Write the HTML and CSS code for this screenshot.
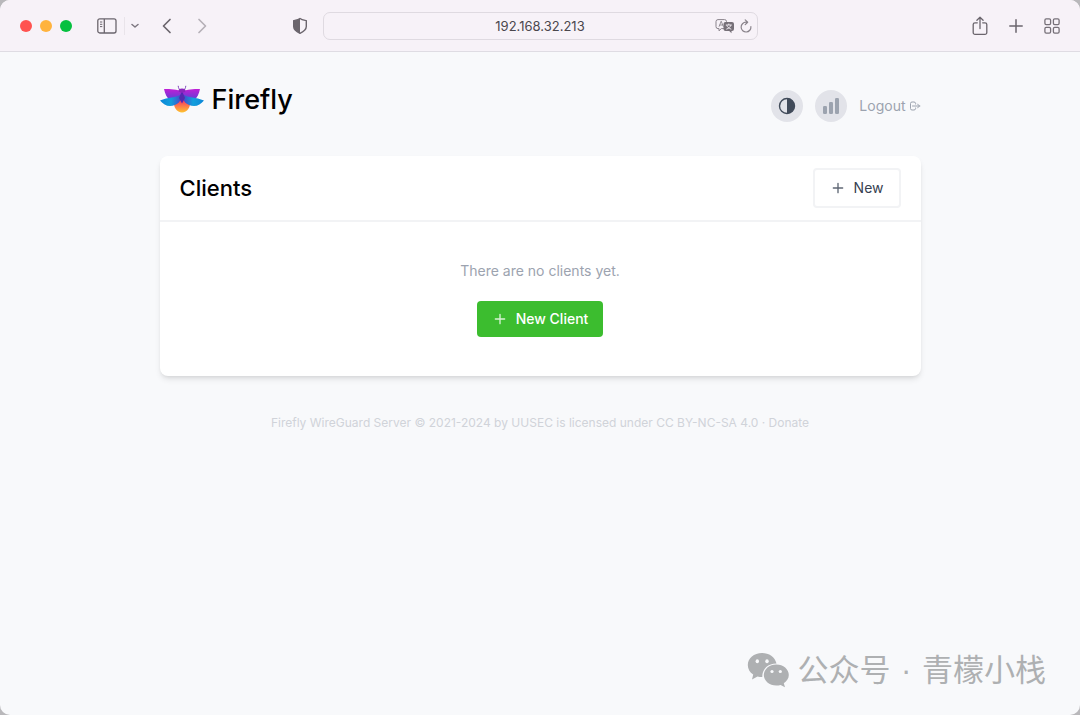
FILE: index.html
```html
<!DOCTYPE html>
<html lang="en">
<head>
<meta charset="utf-8">
<meta name="viewport" content="width=device-width, initial-scale=1">
<title>Firefly</title>
<link rel="stylesheet" href="styles.css">
</head>
<body>
<div class="window">
  <header class="toolbar">
    <div class="toolbar-side">
      <div class="lights">
        <button class="light light-close" aria-label="Close"></button>
        <button class="light light-min" aria-label="Minimize"></button>
        <button class="light light-max" aria-label="Zoom"></button>
      </div>
      <button class="tool" aria-label="Sidebar">
        <svg width="20" height="16" viewBox="0 0 20 16" fill="none" stroke="#6b656d" stroke-width="1.3"><rect x=".8" y=".8" width="18.2" height="14.2" rx="2"/><path d="M7.3 1v14"/><path d="M3 4h2.300M3 6.300h2.300M3 8.600h2.300" stroke-width="1"/></svg>
      </button>
      <button class="tool tool-more" aria-label="Tab groups">
        <svg width="8" height="6" viewBox="0 0 8 6" fill="none" stroke="#7d7780" stroke-width="1.500" stroke-linecap="round" stroke-linejoin="round"><path d="M1 1.500l3 2.500 3-2.500"/></svg>
      </button>
      <button class="tool tool-back" aria-label="Back">
        <svg width="10" height="16" viewBox="0 0 10 16" fill="none" stroke="#6b656d" stroke-width="1.700" stroke-linecap="round" stroke-linejoin="round"><path d="M8 1.500L1.500 8 8 14.500"/></svg>
      </button>
      <button class="tool tool-forward" aria-label="Forward">
        <svg width="10" height="16" viewBox="0 0 10 16" fill="none" stroke="#b6b0b8" stroke-width="1.700" stroke-linecap="round" stroke-linejoin="round"><path d="M2 1.500L8.500 8 2 14.500"/></svg>
      </button>
      <button class="tool tool-shield" aria-label="Privacy report">
        <svg width="16" height="18" viewBox="0 0 16 18"><path d="M8 1.500C6 3 3.500 3.200 1.700 3.600v6c0 3.400 3.300 5.300 6.300 6.700 3-1.400 6.300-3.300 6.300-6.700v-6C12.500 3.200 10 3 8 1.500z" fill="none" stroke="#6b656d" stroke-width="1.400" stroke-linejoin="round"/><path d="M8 1.500C6 3 3.500 3.200 1.700 3.600v6c0 3.400 3.300 5.300 6.300 6.700z" fill="#6b656d"/></svg>
      </button>
    </div>
    <div class="address">
      <input class="address-input" type="text" aria-label="Address" value="192.168.32.213">
      <div class="address-tools">
        <button class="tool" aria-label="Translate">
          <svg width="20" height="16" viewBox="0 0 20 16"><path d="M3 1.600h6.500a2 2 0 0 1 2 2v5a2 2 0 0 1-2 2H6.300L4 12.800v-2.200H3a2 2 0 0 1-2-2v-5a2 2 0 0 1 2-2z" fill="none" stroke="#89838b"/><path d="M4 8.700l2.200-5.500 2.200 5.500M4.800 7h2.900" fill="none" stroke="#89838b" stroke-width=".9"/><path d="M10.500 4H17a2 2 0 0 1 2 2v5a2 2 0 0 1-2 2h-.5v2.300L14.200 13h-3.700a2 2 0 0 1-2-2V6a2 2 0 0 1 2-2z" fill="#767078"/><path d="M10.800 7h6M13.800 5.600V7M11.800 7.200c.5 1.800 2 3.200 4.500 4M15.800 7.200c-.5 1.800-2 3.200-4.500 4" fill="none" stroke="#f7f2f8" stroke-width=".9"/></svg>
        </button>
        <button class="tool" aria-label="Reload">
          <svg width="12" height="14" viewBox="0 0 12 14" fill="none" stroke="#89838b" stroke-width="1.200" stroke-linecap="round" stroke-linejoin="round"><path d="M10.900 7.600A4.900 4.900 0 1 1 6 3.200h1.500M5.200 .9l2.500 2.300-2.500 2.400"/></svg>
        </button>
      </div>
    </div>
    <div class="toolbar-side toolbar-end">
      <button class="tool" aria-label="Share">
        <svg width="16" height="20" viewBox="0 0 16 20" fill="none" stroke="#6b656d" stroke-width="1.300" stroke-linecap="round" stroke-linejoin="round"><path d="M5.300 6.800H3a1.800 1.800 0 0 0-1.800 1.800v8A1.800 1.800 0 0 0 3 18.400h10a1.800 1.800 0 0 0 1.800-1.800v-8A1.800 1.800 0 0 0 13 6.800h-2.300M8 12.500V1.500M4.900 4.300L8 1.300l3.100 3"/></svg>
      </button>
      <button class="tool" aria-label="New tab">
        <svg width="14" height="14" viewBox="0 0 14 14" fill="none" stroke="#6b656d" stroke-width="1.500" stroke-linecap="round"><path d="M7 .8v12.400M.8 7h12.400"/></svg>
      </button>
      <button class="tool" aria-label="Tab overview">
        <svg width="16" height="16" viewBox="0 0 16 16" fill="none" stroke="#777179" stroke-width="1.300"><rect x=".9" y=".9" width="5.700" height="5.700" rx="1.300"/><rect x="9.400" y=".9" width="5.700" height="5.700" rx="1.300"/><rect x=".9" y="9.400" width="5.700" height="5.700" rx="1.300"/><rect x="9.400" y="9.400" width="5.700" height="5.700" rx="1.300"/></svg>
      </button>
    </div>
  </header>

  <main class="page">
    <div class="masthead">
      <h1 class="brand">
        <svg width="44" height="30" viewBox="0 0 44 30" aria-hidden="true">
          <defs>
            <linearGradient id="upper" x1="0" y1="0" x2="0" y2="1"><stop offset="0" stop-color="#c01fd6"/><stop offset="1" stop-color="#5b3fd6"/></linearGradient>
            <linearGradient id="left" x1="0" y1="0" x2="1" y2="0"><stop offset="0" stop-color="#0c86d8"/><stop offset=".5" stop-color="#129fdc"/><stop offset="1" stop-color="#4a3fc8"/></linearGradient>
            <linearGradient id="right" x1="1" y1="0" x2="0" y2="0"><stop offset="0" stop-color="#0c86d8"/><stop offset=".5" stop-color="#129fdc"/><stop offset="1" stop-color="#4a3fc8"/></linearGradient>
            <linearGradient id="tail" x1="0" y1="0" x2="0" y2="1"><stop offset="0" stop-color="#ee1f7c"/><stop offset=".4" stop-color="#fa6552"/><stop offset="1" stop-color="#ffc52e"/></linearGradient>
          </defs>
          <path d="M14 16c3-3 13-3 16 0 1 6-3 11.500-8 11.500S13 22 14 16z" fill="url(#tail)"/>
          <path d="M4 4c7 0 13 0 18 3 5-3 11-3 18-3-1 5-3 9-6 11H10C7 13 5 9 4 4z" fill="url(#upper)"/>
          <path d="M0 15.500C8 12 16 13 22 9c0 7-5 12-12 12-4 0-7-2-10-5.500z" fill="url(#left)"/>
          <path d="M44 15.500C36 12 28 13 22 9c0 7 5 12 12 12 4 0 7-2 10-5.500z" fill="url(#right)"/>
          <path d="M22 6l3 7-3 5.500-3-5.500z" fill="#5527b0"/>
          <path d="M18.200 .8c.2 2.500 1 3.600 2.400 4.200M25.800 .8c-.2 2.500-1 3.600-2.400 4.200" fill="none" stroke="#8148bb" stroke-width="1"/>
          <ellipse cx="22" cy="5.500" rx="3.500" ry="2" fill="#8a25bd"/>
        </svg>
        <span>Firefly</span>
      </h1>
      <div class="actions">
        <button class="round" aria-label="Toggle theme">
          <svg width="18" height="18" viewBox="0 0 18 18"><circle cx="9" cy="9" r="7.500" fill="none" stroke="#414b5a" stroke-width="1.400"/><path d="M9 1.500a7.500 7.500 0 0 1 0 15z" fill="#414b5a"/></svg>
        </button>
        <button class="round" aria-label="Toggle charts">
          <svg width="16" height="16" viewBox="0 0 16 16" fill="#9ca3af"><rect x="0" y="8" width="4" height="8" rx="1.200"/><rect x="6" y="4" width="4" height="12" rx="1.200"/><rect x="12" y="0" width="4" height="16" rx="1.200"/></svg>
        </button>
        <a class="logout" href="#">Logout
          <svg width="12" height="12" viewBox="0 0 24 24" fill="none" stroke="#9ca3af" stroke-width="2" stroke-linecap="round" stroke-linejoin="round"><path d="M17 16l4-4m0 0l-4-4m4 4H7m6 4v1a3 3 0 0 1-3 3H6a3 3 0 0 1-3-3V7a3 3 0 0 1 3-3h4a3 3 0 0 1 3 3v1"/></svg>
        </a>
      </div>
    </div>

    <section class="card">
      <div class="card-head">
        <h2 class="card-title">Clients</h2>
        <button class="btn btn-outline">
          <svg class="plus" width="16" height="16" viewBox="0 0 24 24" fill="none" stroke="currentColor" stroke-width="2" stroke-linecap="round"><path d="M12 5v14M5 12h14"/></svg>
          <span>New</span>
        </button>
      </div>
      <div class="card-body">
        <p class="empty">There are no clients yet.</p>
        <button class="btn btn-primary">
          <svg class="plus" width="16" height="16" viewBox="0 0 24 24" fill="none" stroke="currentColor" stroke-width="2" stroke-linecap="round"><path d="M12 5v14M5 12h14"/></svg>
          <span>New Client</span>
        </button>
      </div>
    </section>

    <footer class="footer"><a href="#">Firefly WireGuard Server</a> © 2021-2024 by <a href="#">UUSEC</a> is licensed under <a href="#">CC BY-NC-SA 4.0</a> · <a href="#">Donate</a></footer>
  </main>

  <div class="watermark">
    <svg width="42" height="36" viewBox="0 0 42 36"><path d="M15 1C7 1 .8 6.200.8 13c0 4 2 7.300 5.400 9.500L5 27.500l5.500-3c1.500.4 3 .6 4.800.6C15 17 21 11.500 29.500 11.500 28 5 22 1 15 1z" fill="#aeb0b2"/><path d="M29.300 12.500c-7 0-12.500 4.700-12.500 10.500S22.300 33.500 29.300 33.500c1.500 0 3-.2 4.300-.6l4.400 2.300-1.200-4c3-1.900 5-4.900 5-8.200 0-5.800-5.500-10.500-12.500-10.500z" fill="#aeb0b2"/><g fill="#f8f9fb"><ellipse cx="10.300" cy="9.300" rx="1.700" ry="2"/><ellipse cx="20" cy="9.300" rx="1.700" ry="2"/><circle cx="25" cy="19.500" r="1.600"/><circle cx="33.300" cy="19.500" r="1.600"/></g></svg>
    <span lang="zh">公众号<span class="dot"> · </span>青檬小栈</span>
  </div>
</div>
</body>
</html>
```
FILE: styles.css
```css
* { box-sizing: border-box; }

body {
  margin: 0;
  background: #b9b8bb;
  font-family: Inter, "Noto Sans CJK SC", sans-serif;
  font-size: 14px;
  line-height: 20px;
}

h1, h2, p { margin: 0; }
a { color: inherit; text-decoration: none; }
svg { display: block; flex: none; }

button {
  border: 0;
  padding: 0;
  background: none;
  font: inherit;
  cursor: pointer;
}

.window {
  position: relative;
  min-height: 100vh;
  border-radius: 10px;
  overflow: hidden;
  background: #f8f9fb;
}

/* Browser toolbar */
.toolbar {
  display: grid;
  grid-template-columns: 1fr minmax(200px, 435px) 1fr;
  align-items: center;
  height: 52px;
  padding: 0 20px;
  background: #f7f2f8;
  border-bottom: 1px solid #dfdce3;
}

.toolbar-side { display: flex; align-items: center; }
.toolbar-end { justify-content: flex-end; gap: 21px; }

.lights { display: flex; gap: 8px; margin-right: 25px; }
.light { width: 12px; height: 12px; border-radius: 50%; }
.light-close { background: #ff5350; }
.light-min { background: #ffb33e; }
.light-max { background: #05c03f; }

.tool { display: flex; }
.tool-more { align-items: center; height: 18px; margin-left: 7px; padding-left: 6px; border-left: 1px solid #e9e4ea; }
.tool-back { margin-left: 23px; }
.tool-forward { margin-left: 25px; }
.tool-shield { margin-left: auto; margin-right: 15px; }

.address { position: relative; }
.address-input {
  display: block;
  width: 100%;
  height: 28px;
  padding: 0 50px;
  border: 1px solid #dfdae1;
  border-radius: 7px;
  background: transparent;
  color: #4b474d;
  font: 13px Inter, sans-serif;
  text-align: center;
}
.address-tools {
  position: absolute;
  top: 0;
  right: 6px;
  bottom: 0;
  display: flex;
  align-items: center;
  gap: 5px;
}

/* Page */
.page {
  width: 100%;
  max-width: 801px;
  margin: 0 auto;
  padding: 32px 20px;
}

.masthead {
  display: flex;
  justify-content: space-between;
  align-items: flex-start;
  margin-bottom: 34px;
}
.brand {
  display: flex;
  align-items: center;
  gap: 8px;
  font-size: 27px;
  font-weight: 500;
  line-height: 32px;
  color: #000;
}
.actions {
  display: flex;
  align-items: center;
  gap: 12px;
  padding-top: 6px;
}
.round {
  display: flex;
  align-items: center;
  justify-content: center;
  width: 32px;
  height: 32px;
  border-radius: 50%;
  background: #e2e3e9;
}
.logout {
  display: flex;
  align-items: center;
  gap: 3px;
  color: #9ca3af;
}

.card {
  border-radius: 8px;
  background: #fff;
  box-shadow: 0 4px 6px -1px rgba(0, 0, 0, .1), 0 2px 4px -2px rgba(0, 0, 0, .1);
}
.card-head {
  display: flex;
  justify-content: space-between;
  align-items: center;
  padding: 12px 20px;
  border-bottom: 2px solid #f2f3f5;
}
.card-title {
  font-size: 22px;
  font-weight: 500;
  line-height: 32px;
  color: #000;
}
.card-body {
  display: flex;
  flex-direction: column;
  align-items: center;
  gap: 20px;
  padding: 39px 20px;
}
.empty { color: #9ca3af; }

.btn {
  display: inline-flex;
  align-items: center;
  gap: 8px;
  padding: 8px 15px;
  border-radius: 4px;
}
.btn-outline { border: 2px solid #f2f3f5; color: #374151; }
.btn-primary { background: #3cbd2f; color: #fff; font-weight: 500; }
.plus { opacity: .8; }

.footer {
  margin-top: 38px;
  text-align: center;
  font-size: 12px;
  line-height: 18px;
  color: #d0d3d9;
}

.watermark {
  position: absolute;
  right: 34px;
  bottom: 24px;
  display: flex;
  align-items: center;
  gap: 8px;
  color: #aeb0b2;
  font-family: "Noto Sans CJK SC", sans-serif;
  font-size: 31px;
  line-height: 40px;
}
.dot {
  padding: 0 2px;
  font-family: "Liberation Sans", sans-serif;
}
```
